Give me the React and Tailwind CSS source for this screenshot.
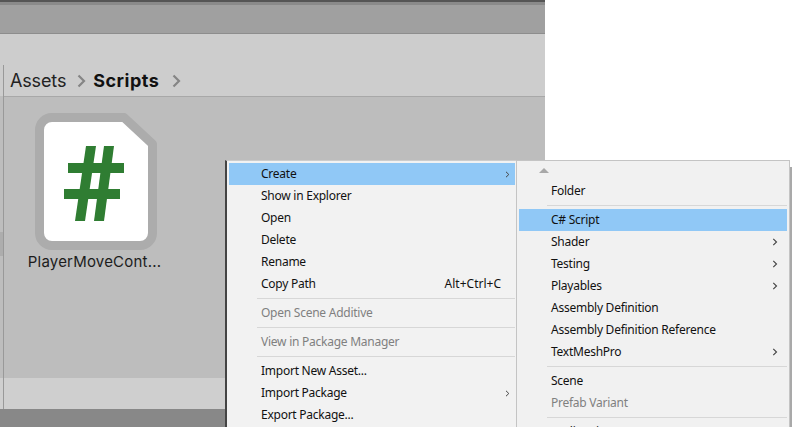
const font = { fontFamily: '"Noto Sans", "Noto Sans CJK KR", sans-serif' };
const labelFont = { fontFamily: "Inter, sans-serif" };

function MenuItem({ label, shortcut, arrow, sub, disabled, active }) {
  return (
    <div
      className={`flex h-[22px] shrink-0 items-center justify-between pl-8 text-[12px] tracking-[-0.25px] ${
        disabled ? "text-[#808080]" : "text-[#111]"
      } ${active ? "bg-[#90c8f6]" : ""}`}
    >
      <span>{label}</span>
      {shortcut && <span className="pr-[14px] tracking-normal">{shortcut}</span>}
      {arrow && (
        <svg
          className={sub ? "mr-[9px] h-[8px] w-[6px]" : "mr-[5px] h-[7px] w-[5px]"}
          viewBox="0 0 5 7"
          fill="none"
        >
          <path d="M1 .8 3.8 3.5 1 6.2" stroke="#444" strokeWidth="1" />
        </svg>
      )}
    </div>
  );
}

function Separator() {
  return <div className="my-[3px] ml-7 h-px shrink-0 bg-[#d7d7d7]" />;
}

function Crumb() {
  return (
    <svg className="h-[14px] w-[9px] shrink-0" viewBox="0 0 9 14" fill="none">
      <path d="M1.500 1.500 7 7 1.500 12.500" stroke="#858585" strokeWidth="2.200" />
    </svg>
  );
}

function ScriptIcon() {
  return (
    <svg className="ml-[3px] h-[137px] w-[122px] shrink-0" viewBox="0 0 122 137">
      <path
        d="M17 4.500H89L117.500 31V120a12.500 12.500 0 0 1-12.500 12.500H17A12.500 12.500 0 0 1 4.500 120V17A12.500 12.500 0 0 1 17 4.500Z"
        fill="#fff"
        stroke="#acacac"
        strokeWidth="9"
        strokeLinejoin="round"
      />
      <g fill="#2f7d32">
        <polygon points="51,33 61,33 50,108 40,108" />
        <polygon points="69,33 79,33 69,108 59,108" />
        <rect x="33" y="50" width="56" height="10" />
        <rect x="29" y="76" width="56" height="10" />
      </g>
    </svg>
  );
}

export default function App() {
  return (
    <div className="relative h-[427px] w-[793px] overflow-hidden bg-white" style={font}>
      <div className="flex h-full w-[545px] flex-col">
        <div className="h-[2px] bg-[#555]" />
        <div className="h-[3px] bg-[#8a8a8a]" />
        <div className="h-[28px] bg-[#a0a0a0]" />
        <div className="h-px bg-[#8d8d8d]" />
        <div className="h-[31px] bg-[#cdcdcd]" />
        <div className="flex min-h-0 flex-1">
          <div className="flex w-[3px] flex-col bg-[#bdbdbd]">
            <div className="h-[31px] bg-[#cdcdcd]" />
            <div className="h-[136px]" />
            <div className="h-[24px] bg-[#adadad]" />
            <div className="flex-1" />
            <div className="h-[31px] bg-[#cfcfcf]" />
          </div>
          <div className="w-px bg-[#999]" />
          <div className="flex flex-1 flex-col">
            <div className="flex h-[32px] items-center border-b border-[#a8a8a8] bg-[#cdcdcd] pl-[6px] text-[18px] text-[#222]">
              <span className="tracking-[-0.15px]" style={labelFont}>
                Assets
              </span>
              <span className="ml-[11px] mr-[7px] flex">
                <Crumb />
              </span>
              <span className="font-bold tracking-[0.5px] text-[#111]" style={labelFont}>
                Scripts
              </span>
              <span className="ml-[13px] flex">
                <Crumb />
              </span>
            </div>
            <div className="flex-1 bg-[#bdbdbd] pl-[24px] pt-[16px]">
              <div className="flex w-[133px] flex-col items-center">
                <ScriptIcon />
                <span className="mt-[3px] whitespace-nowrap text-[15px] leading-[18px] tracking-[0.2px] text-[#1c1c1c]" style={labelFont}>
                  PlayerMoveCont...
                </span>
              </div>
            </div>
            <div className="h-[31px] bg-[#cfcfcf]" />
          </div>
        </div>
        <div className="h-[18px] bg-[#888]" />
      </div>

      {/* context menu */}
      <div className="absolute left-[225px] top-[160px] flex h-[280px] w-[292px] flex-col border-l-2 border-t border-l-[#444] border-t-[#ccc] bg-[#f2f2f2] pl-[2px] pr-[2px] pt-[2px]">
        <MenuItem label="Create" arrow active />
        <MenuItem label="Show in Explorer" />
        <MenuItem label="Open" />
        <MenuItem label="Delete" />
        <MenuItem label="Rename" />
        <MenuItem label="Copy Path" shortcut="Alt+Ctrl+C" />
        <Separator />
        <MenuItem label="Open Scene Additive" disabled />
        <Separator />
        <MenuItem label="View in Package Manager" disabled />
        <Separator />
        <MenuItem label="Import New Asset..." />
        <MenuItem label="Import Package" arrow />
        <MenuItem label="Export Package..." />
      </div>

      {/* create submenu */}
      <div className="absolute left-[516px] top-[160px] flex h-[280px] w-[274px] flex-col border border-[#c4c4c4] bg-[#f1f1f1] px-[2px]">
        <div className="flex h-[19px] shrink-0 items-center pl-[20px]">
          <div className="h-0 w-0 border-x-[5px] border-b-[5px] border-x-transparent border-b-[#a8a8a8]" />
        </div>
        <MenuItem label="Folder" />
        <Separator />
        <MenuItem label="C# Script" active />
        <MenuItem label="Shader" arrow sub />
        <MenuItem label="Testing" arrow sub />
        <MenuItem label="Playables" arrow sub />
        <MenuItem label="Assembly Definition" />
        <MenuItem label="Assembly Definition Reference" />
        <MenuItem label="TextMeshPro" arrow sub />
        <Separator />
        <MenuItem label="Scene" />
        <MenuItem label="Prefab Variant" disabled />
        <Separator />
        <MenuItem label="Audio Mixer" />
      </div>

      {/* sliver of the panel behind the menus */}
      <div className="absolute left-[790px] top-[167px] h-[260px] w-[2px] bg-[#a9a9a9]" />
    </div>
  );
}
